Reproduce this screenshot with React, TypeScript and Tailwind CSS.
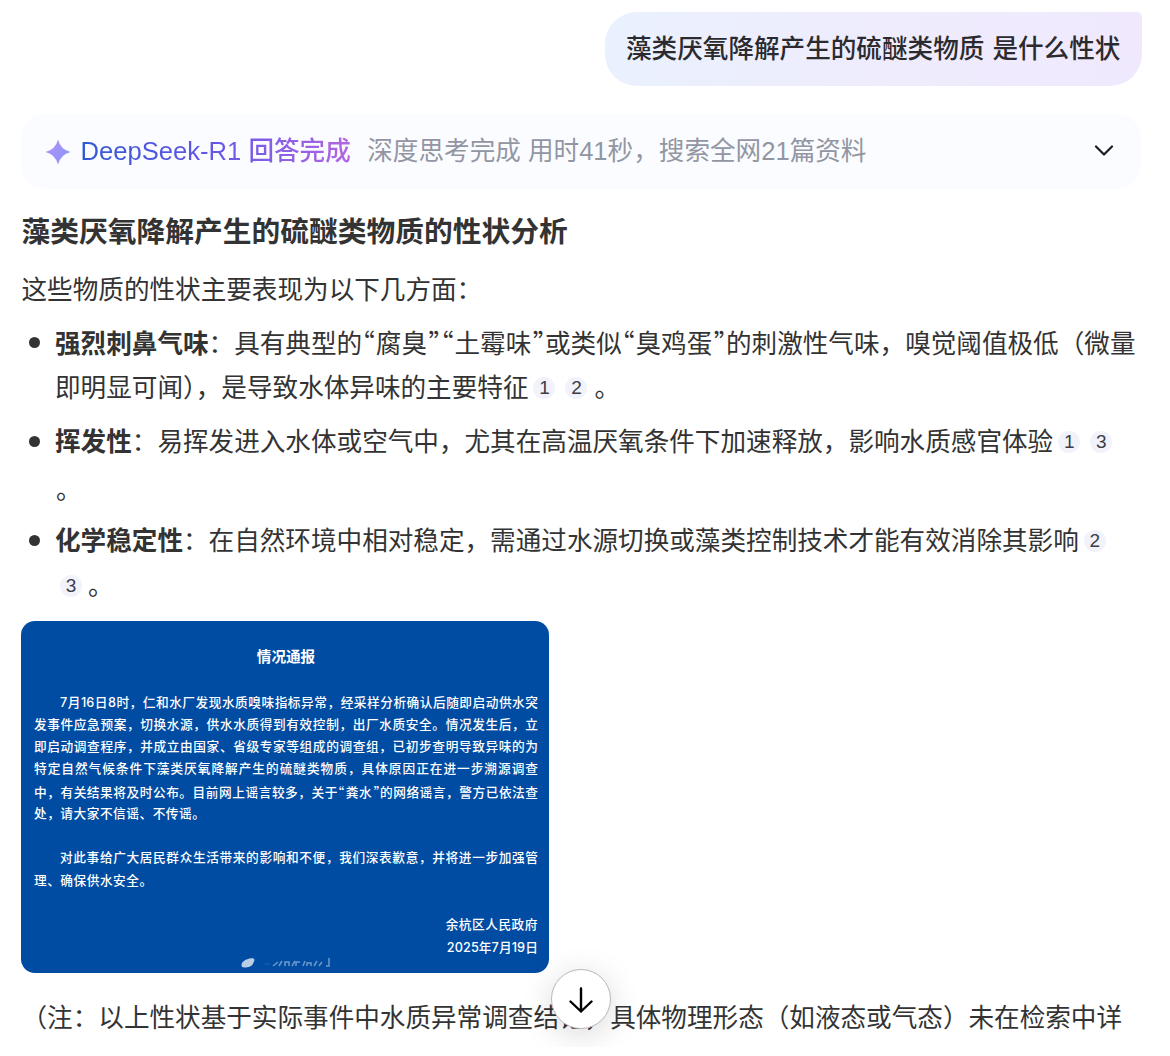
import { ReactNode } from "react";
import clsx from "clsx";

const noticeLines = [
  { text: "7月16日8时，仁和水厂发现水质嗅味指标异常，经采样分析确认后随即启动供水突", indent: true, full: true },
  { text: "发事件应急预案，切换水源，供水水质得到有效控制，出厂水质安全。情况发生后，立", full: true },
  { text: "即启动调查程序，并成立由国家、省级专家等组成的调查组，已初步查明导致异味的为", full: true },
  { text: "特定自然气候条件下藻类厌氧降解产生的硫醚类物质，具体原因正在进一步溯源调查", full: true },
  { text: "中，有关结果将及时公布。目前网上谣言较多，关于“粪水”的网络谣言，警方已依法查", full: true },
  { text: "处，请大家不信谣、不传谣。" },
  { text: "" },
  { text: "对此事给广大居民群众生活带来的影响和不便，我们深表歉意，并将进一步加强管", indent: true, full: true },
  { text: "理、确保供水安全。" },
];

function Quote({ children }: { children: string }) {
  return (
    <span
      className={clsx(
        "font-['Noto_Sans_CJK_SC'] [font-feature-settings:'halt']",
        children === "”" ? "mr-[-0.6px] pl-[1.5px]" : "tracking-[0.9px]",
      )}
    >
      {children}
    </span>
  );
}

function Cite({ n, className }: { n: number; className?: string }) {
  return (
    <span
      className={clsx(
        "inline-flex h-[22px] w-[22px] shrink-0 items-center justify-center rounded-full bg-[#f2f2fb] pb-px text-[19px] leading-none text-[#3d3d46]",
        className,
      )}
    >
      {n}
    </span>
  );
}

function Item({ children, className }: { children: ReactNode; className?: string }) {
  return (
    <li className={clsx("flex", className)}>
      <span className="mt-[16px] ml-[8px] h-[11px] w-[11px] shrink-0 rounded-full bg-[#333]" />
      <div className="ml-[15px] whitespace-nowrap">{children}</div>
    </li>
  );
}

function Row({ children, className }: { children: ReactNode; className?: string }) {
  return <div className={clsx("flex h-[44px] items-center", className)}>{children}</div>;
}

function NoticeCard() {
  return (
    <div className="relative h-[352px] w-[528px] overflow-hidden rounded-[14px] bg-[#004ca2] pt-[25px] pr-[11px] pl-[13px] font-['Inter','Noto_Sans_CJK_SC',sans-serif] font-medium text-white">
      <div className="text-center text-[14.6px] leading-[22px] font-bold">情况通报</div>
      <div className="mt-[23.5px] text-[12.7px]">
        {noticeLines.map((line, i) => (
          <div
            key={i}
            className={clsx(
              "h-[22.25px] leading-[22.25px] whitespace-nowrap",
              line.indent && "pl-[26px]",
              line.full ? "[text-align-last:justify]" : "tracking-[0.5px]",
            )}
          >
            {line.text.split(/([“”])/).map((part, j) =>
              part === "“" || part === "”" ? <Quote key={j}>{part}</Quote> : part,
            )}
          </div>
        ))}
      </div>
      <div className="mt-[22.5px] flex flex-col items-end text-[12.7px] leading-[22.25px]">
        <span className="tracking-[0.5px]">余杭区人民政府</span>
        <span className="tracking-[0.1px]">2025年7月19日</span>
      </div>
      <svg
        className="absolute bottom-[3px] left-[218px] blur-[0.7px]"
        width="94"
        height="18"
        viewBox="0 0 94 18"
        fill="none"
      >
        <path d="M2.5 13.5c0-4 4-6 8-7 5-1 6 1 4 4-1 4-5 5-9 5-2 0-3-1-3-2Z" fill="#b9cfe6" />
        <path d="M26 12h5" stroke="#3470b3" strokeWidth="1.5" opacity=".4" />
        <path
          d="M34 14l5-4M40 14l3-5M46 14v-4h4v4M53 14l3-5M57 14v-4h4M64 14l2-5M68 14v-3h4v3M75 14l3-5M80 14l3-4M87 14h3V6"
          stroke="#9bb9da"
          strokeWidth="1.5"
          opacity=".7"
        />
      </svg>
    </div>
  );
}

export default function App() {
  return (
    <div className="relative h-[1056px] w-[1170px] overflow-hidden bg-white pt-[12px] pl-[21px] font-['Liberation_Sans','Noto_Sans_CJK_SC',sans-serif] text-[25.6px] text-[#333]">
      <div className="ml-[584px] flex h-[74px] w-[537px] items-center rounded-[32px] rounded-tr-[5px] bg-linear-to-r from-[#eaf1fe] via-[#eeecfd] to-[#f0e9fd] pt-[2px] pl-[21px] leading-none font-medium whitespace-nowrap text-[#2b2b2f] [word-spacing:1px]">
        藻类厌氧降解产生的硫醚类物质 是什么性状
      </div>

      <div className="mt-[28px] flex h-[75px] w-[1120px] items-center rounded-[24px] bg-[#fbfcff] pr-[27px] pl-[24px] whitespace-nowrap">
        <svg width="26" height="26" viewBox="0 0 26 26">
          <defs>
            <linearGradient id="spark" x1="0" y1="0" x2="1" y2="1">
              <stop stopColor="#b891f5" />
              <stop offset="1" stopColor="#8297fb" />
            </linearGradient>
          </defs>
          <path
            d="M13 0.5Q15.5 10.5 25.5 13Q15.5 15.5 13 25.5Q10.5 15.5 0.5 13Q10.5 10.5 13 0.5Z"
            fill="url(#spark)"
          />
        </svg>
        <span className="ml-[9.5px] bg-linear-to-r from-[#2f56d6] via-[#6456e6] to-[#b365e2] bg-clip-text text-transparent">
          DeepSeek-R1 <span className="font-medium">回答完成</span>
        </span>
        <span className="ml-[16.5px] text-[#9296a3]">深度思考完成 用时41秒，搜索全网21篇资料</span>
        <svg
          className="mb-[2px] ml-auto"
          width="20"
          height="12"
          viewBox="0 0 20 12"
          fill="none"
          stroke="#1c1c28"
          strokeWidth="2.2"
          strokeLinecap="round"
          strokeLinejoin="round"
        >
          <path d="M2 1.5l8 8 8-8" />
        </svg>
      </div>

      <h2 className="mt-[21px] h-[44px] pl-[0.5px] text-[28.75px] leading-[44px] font-bold whitespace-nowrap">
        藻类厌氧降解产生的硫醚类物质的性状分析
      </h2>
      <p className="mt-[14px] h-[44px] pl-[0.5px] leading-[44px]">这些物质的性状主要表现为以下几方面：</p>

      <ul className="mt-[9px]">
        <Item>
          <Row>
            <p>
              <b>强烈刺鼻气味</b>：具有典型的<Quote>“</Quote>腐臭<Quote>”</Quote>
              <Quote>“</Quote>土霉味<Quote>”</Quote>或类似<Quote>“</Quote>臭鸡蛋
              <Quote>”</Quote>的刺激性气味，嗅觉阈值极低（微量
            </p>
          </Row>
          <Row className="mt-px">
            即明显可闻），是导致水体异味的主要特征
            <Cite n={1} className="ml-[5px]" />
            <Cite n={2} className="ml-[10px]" />
            <span className="ml-[7px]">。</span>
          </Row>
        </Item>
        <Item className="mt-[10px]">
          <Row>
            <b>挥发性</b>：易挥发进入水体或空气中，尤其在高温厌氧条件下加速释放，影响水质感官体验
            <Cite n={1} className="ml-[5px]" />
            <Cite n={3} className="ml-[10px]" />
          </Row>
          <Row className="mt-[4px] pl-px">。</Row>
        </Item>
        <Item className="mt-[7px]">
          <Row>
            <b>化学稳定性</b>：在自然环境中相对稳定，需通过水源切换或藻类控制技术才能有效消除其影响
            <Cite n={2} className="ml-[5px]" />
          </Row>
          <Row className="mt-px">
            <Cite n={3} className="ml-[5px]" />
            <span className="ml-[6px]">。</span>
          </Row>
        </Item>
      </ul>

      <div className="mt-[13px]">
        <NoticeCard />
      </div>

      <p className="mt-[23px] h-[44px] pl-[0.5px] leading-[44px] whitespace-nowrap">
        （注：以上性状基于实际事件中水质异常调查结论，具体物理形态（如液态或气态）未在检索中详
      </p>

      <div className="pointer-events-none absolute inset-x-0 top-[900px] h-[147px] overflow-hidden">
        <button className="absolute top-[69px] left-[551px] flex h-[60px] w-[60px] items-center justify-center rounded-full border border-[#b8b8b8] bg-white pt-[2px] shadow-[0_6px_32px_rgba(0,0,0,0.15)]">
          <svg
            width="24"
            height="26"
            viewBox="0 0 24 26"
            fill="none"
            stroke="#000"
            strokeWidth="2.4"
            strokeLinecap="round"
            strokeLinejoin="round"
          >
            <path d="M12 1.5v23M1.5 14.5L12 24.5l10.5-10" />
          </svg>
        </button>
      </div>
    </div>
  );
}
